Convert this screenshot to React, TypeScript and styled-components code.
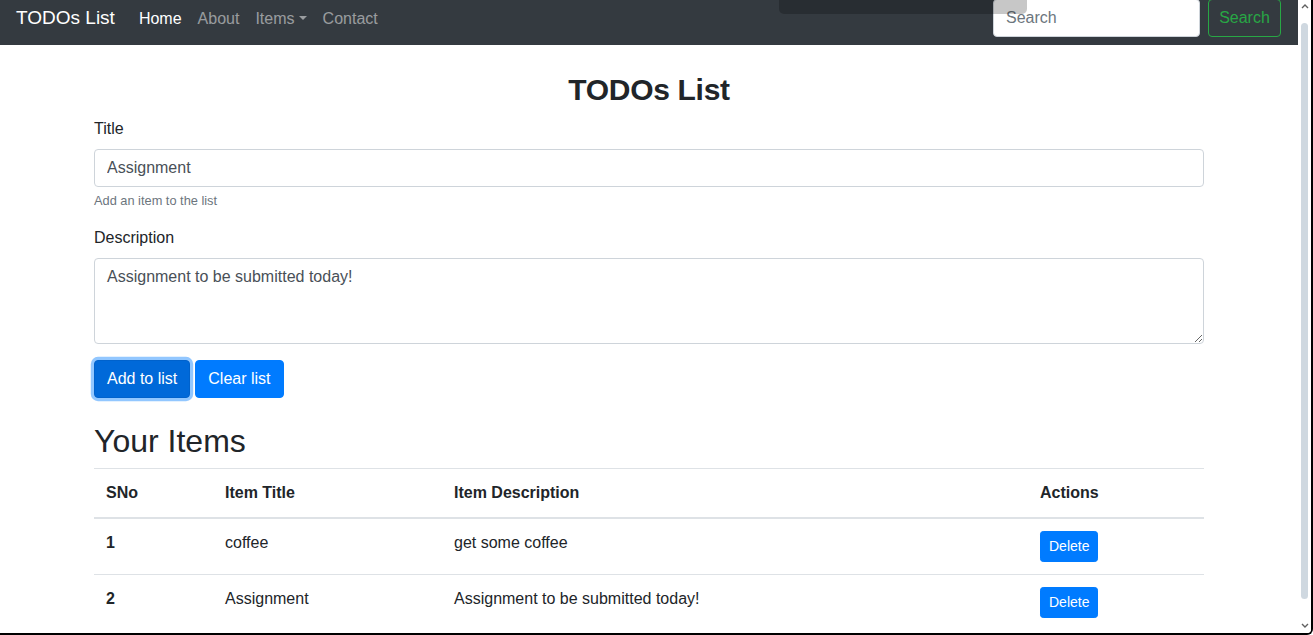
import React from "react";
import styled, { createGlobalStyle } from "styled-components";

const GlobalStyle = createGlobalStyle`
  html, body { margin: 0; padding: 0; background: #fff; }
  body {
    font-family: "Liberation Sans", Arial, sans-serif;
    font-size: 16px;
    line-height: 1.5;
    color: #212529;
  }
  *, *::before, *::after { box-sizing: border-box; }
`;

const Frame = styled.div`
  display: flex;
  width: 1313px;
  height: 635px;
  border-right: 2px solid #000;
  border-bottom: 2px solid #000;
  border-bottom-right-radius: 6px;
  overflow: hidden;
  background: #fff;
`;

const Viewport = styled.div`
  flex: 1;
  position: relative;
  overflow: hidden;
`;

const ScrolledPage = styled.div`
  margin-top: -9px;
`;

const Overlay = styled.div`
  position: absolute;
  left: 779px;
  top: 0;
  width: 248px;
  height: 14px;
  background: rgba(0, 0, 0, 0.22);
  border-radius: 0 0 5px 5px;
  z-index: 5;
`;

const ScrollTrack = styled.div`
  width: 13px;
  display: flex;
  flex-direction: column;
  align-items: center;
  background: #fff;
  padding: 3px 0 4px;
`;

const ScrollThumb = styled.div`
  flex: 1;
  width: 7px;
  margin: 14px 0 24px;
  border-radius: 4px;
  background: #cfd8e0;
`;

const Navbar = styled.nav`
  display: flex;
  align-items: center;
  height: 54px;
  padding: 0 17px 0 16px;
  background: #343a40;
`;

const Brand = styled.a`
  font-size: 19px;
  line-height: 30px;
  padding: 5px 0;
  margin-right: 16px;
  color: #fff;
  text-decoration: none;
  white-space: nowrap;
`;

const NavList = styled.ul`
  display: flex;
  flex: 1;
  list-style: none;
  margin: 0;
  padding: 0;
`;

const NavLink = styled.a<{ $active?: boolean }>`
  display: block;
  padding: 9px 8px 7px;
  font-size: 16px;
  line-height: 24px;
  text-decoration: none;
  color: ${(p) => (p.$active ? "#fff" : "rgba(255,255,255,.5)")};
`;

const Caret = styled.span`
  display: inline-block;
  margin-left: 0.255em;
  vertical-align: 0.255em;
  border-top: 0.3em solid;
  border-right: 0.3em solid transparent;
  border-left: 0.3em solid transparent;
`;

const SearchForm = styled.form`
  display: flex;
  align-items: center;
`;

const SearchInput = styled.input`
  width: 207px;
  height: 38px;
  margin-right: 8px;
  padding: 6px 12px;
  font: inherit;
  font-size: 16px;
  color: #495057;
  background: #fff;
  border: 1px solid #ced4da;
  border-radius: 4px;
  outline: none;
  &::placeholder { color: #6c757d; }
`;

const OutlineButton = styled.button`
  width: 73px;
  height: 38px;
  padding: 6px 0;
  font: inherit;
  font-size: 16px;
  line-height: 24px;
  color: #28a745;
  background: transparent;
  border: 1px solid #28a745;
  border-radius: 4px;
`;

const Container = styled.main`
  width: 1140px;
  margin: 26px auto 0;
  padding: 0 15px;
`;

const Heading = styled.h2<{ $center?: boolean; $top?: number }>`
  font-size: ${(p) => (p.$center ? "30px" : "32px")};
  font-weight: ${(p) => (p.$center ? 700 : 400)};
  letter-spacing: ${(p) => (p.$center ? "-0.3px" : "0")};
  line-height: 38px;
  margin: ${(p) => p.$top ?? 0}px 0 8px;
  text-align: ${(p) => (p.$center ? "center" : "left")};
`;

const FormGroup = styled.div`
  margin-bottom: 16px;
`;

const Label = styled.label`
  display: block;
  margin-bottom: 8px;
`;

const TextInput = styled.input`
  display: block;
  width: 100%;
  height: 38px;
  padding: 6px 12px;
  font: inherit;
  color: #495057;
  background: #fff;
  border: 1px solid #ced4da;
  border-radius: 4px;
  outline: none;
`;

const TextArea = styled.textarea`
  display: block;
  width: 100%;
  height: 86px;
  padding: 6px 12px;
  font: inherit;
  color: #495057;
  background: #fff;
  border: 1px solid #ced4da;
  border-radius: 4px;
  outline: none;
  resize: vertical;
`;

const HelpText = styled.small`
  display: block;
  margin-top: 4px;
  font-size: 12.8px;
  color: #6c757d;
`;

const ButtonRow = styled.div`
  display: flex;
  gap: 5px;
`;

const PrimaryButton = styled.button<{ $focused?: boolean; $small?: boolean }>`
  padding: ${(p) => (p.$small ? "4px 8px" : "6px 12px")};
  font: inherit;
  font-size: ${(p) => (p.$small ? "14px" : "16px")};
  line-height: 1.5;
  color: #fff;
  background: ${(p) => (p.$focused ? "#0069d9" : "#007bff")};
  border: 1px solid ${(p) => (p.$focused ? "#0062cc" : "#007bff")};
  border-radius: ${(p) => (p.$small ? "3.2px" : "4px")};
  box-shadow: ${(p) => (p.$focused ? "0 0 0 3.2px rgba(38,143,255,.5)" : "none")};
`;

const Table = styled.table`
  width: 100%;
  border-collapse: collapse;
  table-layout: fixed;
`;

const HeadCell = styled.th<{ $bottom?: boolean }>`
  padding: 12px;
  text-align: left;
  font-weight: 700;
  vertical-align: ${(p) => (p.$bottom ? "bottom" : "top")};
  border-top: 1px solid #dee2e6;
  border-bottom: ${(p) => (p.$bottom ? "2px solid #dee2e6" : "none")};
`;

const Cell = styled.td`
  padding: 12px;
  vertical-align: top;
  border-top: 1px solid #dee2e6;
`;

const Chevron = ({ up }: { up?: boolean }) => (
  <svg width="8" height="6" viewBox="0 0 8 6">
    <path
      d={up ? "M1 5 L4 2 L7 5" : "M1 1 L4 4 L7 1"}
      fill="none"
      stroke="#606060"
      strokeWidth="1.4"
    />
  </svg>
);

const items = [
  { sno: 1, title: "coffee", desc: "get some coffee" },
  { sno: 2, title: "Assignment", desc: "Assignment to be submitted today!" },
];

export default function App() {
  return (
    <>
      <GlobalStyle />
      <Frame>
        <Viewport>
          <Overlay />
          <ScrolledPage>
            <Navbar>
              <Brand href="#">TODOs List</Brand>
              <NavList>
                <li><NavLink href="#" $active>Home</NavLink></li>
                <li><NavLink href="#">About</NavLink></li>
                <li><NavLink href="#">Items<Caret /></NavLink></li>
                <li><NavLink href="#">Contact</NavLink></li>
              </NavList>
              <SearchForm onSubmit={(e) => e.preventDefault()}>
                <SearchInput type="search" placeholder="Search" />
                <OutlineButton type="submit">Search</OutlineButton>
              </SearchForm>
            </Navbar>
            <Container>
              <Heading $center>TODOs List</Heading>
              <FormGroup>
                <Label>Title</Label>
                <TextInput defaultValue="Assignment" />
                <HelpText>Add an item to the list</HelpText>
              </FormGroup>
              <FormGroup>
                <Label>Description</Label>
                <TextArea defaultValue="Assignment to be submitted today!" />
              </FormGroup>
              <ButtonRow>
                <PrimaryButton $focused>Add to list</PrimaryButton>
                <PrimaryButton>Clear list</PrimaryButton>
              </ButtonRow>
              <Heading $top={24}>Your Items</Heading>
              <Table>
                <colgroup>
                  <col style={{ width: 119 }} />
                  <col style={{ width: 229 }} />
                  <col style={{ width: 586 }} />
                  <col style={{ width: 176 }} />
                </colgroup>
                <thead>
                  <tr>
                    <HeadCell $bottom>SNo</HeadCell>
                    <HeadCell $bottom>Item Title</HeadCell>
                    <HeadCell $bottom>Item Description</HeadCell>
                    <HeadCell $bottom>Actions</HeadCell>
                  </tr>
                </thead>
                <tbody>
                  {items.map((it) => (
                    <tr key={it.sno}>
                      <HeadCell>{it.sno}</HeadCell>
                      <Cell>{it.title}</Cell>
                      <Cell>{it.desc}</Cell>
                      <Cell>
                        <PrimaryButton $small>Delete</PrimaryButton>
                      </Cell>
                    </tr>
                  ))}
                </tbody>
              </Table>
            </Container>
          </ScrolledPage>
        </Viewport>
        <ScrollTrack>
          <Chevron up />
          <ScrollThumb />
          <Chevron />
        </ScrollTrack>
      </Frame>
    </>
  );
}
